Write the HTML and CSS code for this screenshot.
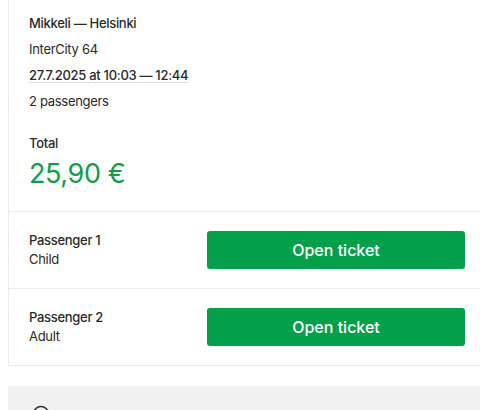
FILE: index.html
```html
<!DOCTYPE html>
<html lang="en">
<head>
<meta charset="utf-8">
<link rel="stylesheet" href="styles.css">
</head>
<body>
<div class="page">
  <section class="card">
    <div class="summary">
      <div class="line title">Mikkeli — Helsinki</div>
      <div class="line">InterCity 64</div>
      <div class="line date"><span class="dotted">27.7.2025 at 10:03 — 12:44</span></div>
      <div class="line">2 passengers</div>
      <div class="total-label">Total</div>
      <div class="price">25,90 €</div>
    </div>
    <div class="passenger">
      <div class="who">
        <div class="name">Passenger 1</div>
        <div class="type">Child</div>
      </div>
      <button class="open">Open ticket</button>
    </div>
    <div class="passenger">
      <div class="who">
        <div class="name">Passenger 2</div>
        <div class="type">Adult</div>
      </div>
      <button class="open">Open ticket</button>
    </div>
  </section>
  <section class="info">
    <svg class="info-icon" width="18" height="18" viewBox="0 0 18 18"><circle cx="9" cy="9" r="7.5" fill="none" stroke="#333" stroke-width="1.6"/></svg>
  </section>
</div>
</body>
</html>
```
FILE: styles.css
```css
html, body {
  margin: 0;
  padding: 0;
  background: #fff;
  overflow: hidden;
}
body {
  font-family: Inter, "Liberation Sans", sans-serif;
  color: #2a2a2a;
  width: 480px;
  height: 410px;
}
.page {
  padding-left: 8px;
}
.card {
  border: 1px solid #ececec;
  border-top: none;
  border-right: none;
  background: #fff;
}
.summary {
  padding: 10px 0 19px 20px;
}
.line {
  font-size: 13px;
  line-height: 26px;
  letter-spacing: -0.3px;
}
.title, .date {
  font-weight: 500;
}
.dotted {
  text-decoration: underline;
  text-decoration-color: #dedede;
  text-underline-offset: 2px;
}
.total-label {
  margin-top: 16px;
  font-size: 13px;
  font-weight: 500;
  line-height: 26px;
  letter-spacing: -0.3px;
}
.price {
  font-size: 27px;
  line-height: 36px;
  color: #0d9f4a;
  font-weight: 400;
  letter-spacing: -0.4px;
}
.passenger {
  display: flex;
  align-items: center;
  border-top: 1px solid #ececec;
  padding: 19px 0 19px 20px;
}
.who {
  width: 178px;
  font-size: 13px;
  line-height: 19px;
  letter-spacing: -0.3px;
}
.name {
  font-weight: 500;
}
.open {
  width: 258px;
  height: 38px;
  border: none;
  border-radius: 3px;
  background: #03a04a;
  color: #fff;
  font-family: Inter, "Liberation Sans", sans-serif;
  font-size: 16px;
  font-weight: 500;
  cursor: pointer;
}
.info {
  margin-top: 20px;
  background: #f1f1f1;
  height: 60px;
  padding: 19px 0 0 24px;
  box-sizing: border-box;
}
.info-icon {
  display: block;
}
```
